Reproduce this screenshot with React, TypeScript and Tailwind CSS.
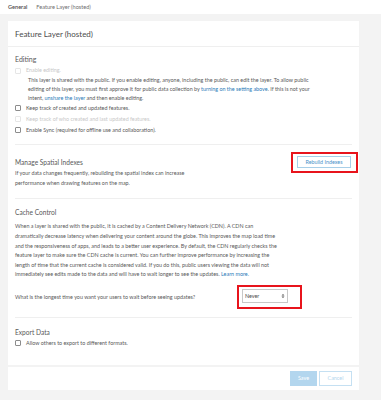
import * as React from 'react';

const Checkbox = ({ disabled }: { disabled?: boolean }) => (
  <span
    className={
      'inline-block h-[6px] w-[6px] shrink-0 rounded-[1px] border bg-white ' +
      (disabled ? 'border-[#e6e6e6]' : 'border-[#8c8c8c]')
    }
  />
);

const CheckRow = ({ label, disabled }: { label: string; disabled?: boolean }) => (
  <div className="flex h-[11px] items-center gap-[5px]">
    <Checkbox disabled={disabled} />
    <span className={disabled ? 'text-[#c8c8c8]' : 'text-[#595959]'}>{label}</span>
  </div>
);

const Divider = () => <div className="h-px bg-[#efefef]" />;

const Link = ({ children }: { children: React.ReactNode }) => (
  <span className="text-[#2a7ab8]">{children}</span>
);

export default function App() {
  return (
    <div className="h-[400px] w-[381px] overflow-hidden bg-[#f3f3f3] font-['Lato',sans-serif] text-[5.4px] text-[#595959]">
      <div className="flex h-[14px] items-center gap-[9px] bg-white px-[8px] text-[5.6px]">
        <span className="font-semibold text-[#4c4c4c]">General</span>
        <span className="text-[#6e6e6e]">Feature Layer (hosted)</span>
      </div>

      <div className="px-[8px] pt-[7px]">
        <div className="w-[351px] bg-white">
          <div className="flex h-[26px] items-center border-b border-[#efefef] px-[7px] text-[8px] text-[#4c4c4c]">
            Feature Layer (hosted)
          </div>

          <div className="px-[7px]">
            {/* Editing */}
            <div className="pt-[7px] pb-[9px]">
              <div className="h-[11px] text-[7px] leading-[11px] text-[#595959]">Editing</div>
              <CheckRow label="Enable editing." disabled />
              <div className="whitespace-nowrap pl-[13px] leading-[8.8px]">
                This layer is shared with the public. If you enable editing, anyone, including the public, can edit the layer. To allow public
                <br />
                editing of this layer, you must first approve it for public data collection by <Link>turning on the setting above</Link>. If this is not your
                <br />
                intent, <Link>unshare the layer</Link> and then enable editing.
              </div>
              <div>
                <CheckRow label="Keep track of created and updated features." />
                <CheckRow label="Keep track of who created and last updated features." disabled />
                <CheckRow label="Enable Sync (required for offline use and collaboration)." />
              </div>
            </div>
            <Divider />

            {/* Spatial indexes */}
            <div className="flex items-start justify-between pt-[11px] pb-[10px]">
              <div>
                <div className="h-[12px] text-[6.6px] leading-[12px]">Manage Spatial Indexes</div>
                <div className="leading-[10px]">
                  If your data changes frequently, rebuilding the spatial index can increase
                  <br />
                  performance when drawing features on the map.
                </div>
              </div>
              <div className="-mt-[4px] mr-[-6px] border-2 border-[#e8141c] pt-[2px] pr-[5px] pb-[3px] pl-[4px]">
                <div className="flex h-[12px] w-[54px] items-center justify-center border border-[#a8cfe8] text-[5.4px] text-[#4d93c9]">
                  Rebuild Indexes
                </div>
              </div>
            </div>
            <Divider />

            {/* Cache control */}
            <div className="pt-[7px] pb-[8px]">
              <div className="h-[12px] text-[6.6px] leading-[12px]">Cache Control</div>
              <div className="mt-[4px] whitespace-nowrap leading-[9.6px]">
                When a layer is shared with the public, it is cached by a Content Delivery Network (CDN). A CDN can
                <br />
                dramatically decrease latency when delivering your content around the globe. This improves the map load time
                <br />
                and the responsiveness of apps, and leads to a better user experience. By default, the CDN regularly checks the
                <br />
                feature layer to make sure the CDN cache is current. You can further improve performance by increasing the
                <br />
                length of time that the current cache is considered valid. If you do this, public users viewing the data will not
                <br />
                immediately see edits made to the data and will have to wait longer to see the updates. <Link>Learn more.</Link>
              </div>
              <div className="mt-[5px] flex items-center">
                <span className="w-[222px]">What is the longest time you want your users to wait before seeing updates?</span>
                <div className="border-2 border-[#e8141c] pt-[2px] pr-[12px] pb-[4px] pl-[3px]">
                  <div className="flex h-[14px] w-[46px] items-center justify-between border border-[#c8c8c8] px-[2px] text-[#4c4c4c]">
                    <span>Never</span>
                    <svg width="4" height="6" viewBox="0 0 4 6">
                      <path d="M0.5 2.5 L2 1 L3.5 2.5 Z M0.5 3.5 L2 5 L3.5 3.5 Z" fill="#555" />
                    </svg>
                  </div>
                </div>
              </div>
            </div>
            <Divider />

            {/* Export */}
            <div className="pt-[9px] pb-[16px]">
              <div className="h-[11px] text-[6.6px] leading-[11px]">Export Data</div>
              <CheckRow label="Allow others to export to different formats." />
            </div>
          </div>

          <div className="flex h-[25px] items-center justify-end gap-[2px] border-t-2 border-[#f3f3f3] px-[7px]">
            <div className="flex h-[15px] w-[27px] items-center justify-center bg-[#b3d6ee] text-white">Save</div>
            <div className="flex h-[15px] w-[33px] items-center justify-center border border-[#c5e0f2] text-[#b3d6ee]">Cancel</div>
          </div>
        </div>
      </div>
    </div>
  );
}
